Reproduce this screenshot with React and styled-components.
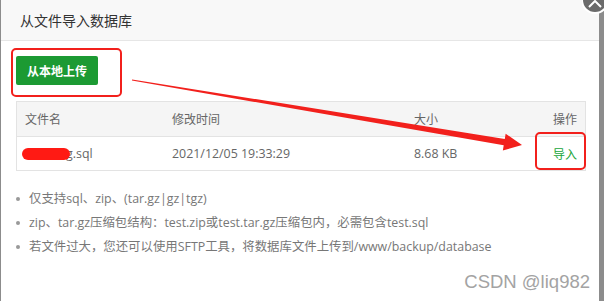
import React from 'react';
import styled, { createGlobalStyle } from 'styled-components';

const GlobalStyle = createGlobalStyle`
  html, body {
    margin: 0;
    padding: 0;
    background: #8c8c8c;
    overflow: hidden;
  }
  body {
    font-family: "Open Sans", "Noto Sans CJK SC", sans-serif;
    text-spacing-trim: space-all;
  }
`;

const Backdrop = styled.div`
  width: 604px;
  height: 301px;
  display: flex;
  background: #8c8c8c;
`;

const Dialog = styled.div`
  position: relative;
  margin-left: 1px;
  width: 598px;
  height: 301px;
  background: #fff;
  display: flex;
  flex-direction: column;
`;

const Header = styled.div`
  height: 40px;
  line-height: 40px;
  padding-left: 19px;
  background: #f8f8f8;
  border-bottom: 1px solid #e6e6e6;
  color: #333;
  font-size: 14px;
  font-family: "Noto Sans CJK SC", sans-serif;
`;

const Body = styled.div`
  padding: 15px 12px 0 15px;
  display: flex;
  flex-direction: column;
  align-items: flex-start;
`;

const UploadButton = styled.button`
  height: 29px;
  padding: 0 11px;
  border: none;
  border-radius: 2px;
  background: #1c9a33;
  color: #fff;
  font-size: 12px;
  font-weight: 600;
  font-family: "Noto Sans CJK SC", sans-serif;
`;

const Table = styled.table`
  margin-top: 16px;
  width: 570px;
  border-collapse: collapse;
  border: 1px solid #e3e3e3;
  font-size: 12.4px;
  color: #666;
  table-layout: fixed;
`;

const Th = styled.th`
  height: 34px;
  background: #f5f5f5;
  font-weight: normal;
  font-size: 12px;
  text-align: ${(p) => p.$align || 'left'};
  padding: 0 ${(p) => (p.$align === 'right' ? '8px' : '0')} 0 ${(p) => p.$pl || '0'};
  border-bottom: 1px solid #e3e3e3;
  width: ${(p) => p.$w || 'auto'};
`;

const Td = styled.td`
  height: 33px;
  text-align: ${(p) => p.$align || 'left'};
  padding: 0 ${(p) => (p.$align === 'right' ? '8px' : '0')} 0 ${(p) => p.$pl || '0'};
  color: ${(p) => p.$color || '#666'};
`;

const Redact = styled.span`
  display: inline-block;
  vertical-align: middle;
  width: 48px;
  height: 12px;
  margin: -2px -4px 0 -3px;
  border-radius: 6px;
  background: #ff1a14;
  position: relative;
`;

const ImportLink = styled.a`
  color: #20a53a;
  font-size: 12px;
  font-family: "Noto Sans CJK SC", sans-serif;
  cursor: pointer;
`;

const Tips = styled.ul`
  list-style: none;
  margin: 16px 0 0;
  padding: 0;
  font-size: 12.4px;
  color: #777;
`;

const Tip = styled.li`
  line-height: 24px;
  display: flex;
  align-items: center;
  &::before {
    content: '';
    width: 4px;
    height: 4px;
    border-radius: 50%;
    background: #999;
    margin: 0 9px 0 0;
  }
`;

const Mark = styled.div`
  position: absolute;
  left: ${(p) => p.$x}px;
  top: ${(p) => p.$y}px;
  width: ${(p) => p.$w}px;
  height: ${(p) => p.$h}px;
  border: 2px solid #f2201c;
  border-radius: 5px;
  box-sizing: border-box;
  pointer-events: none;
`;

const Overlay = styled.svg`
  position: absolute;
  left: 0;
  top: 0;
  pointer-events: none;
`;

const Watermark = styled.div`
  position: absolute;
  right: 9px;
  bottom: 8px;
  font-family: "Liberation Sans", Arial, sans-serif;
  font-size: 18.5px;
  color: #a3a3a3;
  text-shadow: 0 0 1px #fff;
`;

function Arrow() {
  // shaft tapers from a thin start to a wide end, then the head
  const sx = 131, sy = 80, tx = 521, ty = 145;
  const dx = tx - sx, dy = ty - sy;
  const len = Math.hypot(dx, dy);
  const ux = dx / len, uy = dy / len;
  const nx = -uy, ny = ux;
  const headLen = 18, headW = 8.5, shaftW = 3.2;
  const bx = tx - ux * headLen, by = ty - uy * headLen;
  const pts = [
    [sx + nx * 0.6, sy + ny * 0.6],
    [bx + nx * shaftW, by + ny * shaftW],
    [bx + nx * headW, by + ny * headW],
    [tx, ty],
    [bx - nx * headW, by - ny * headW],
    [bx - nx * shaftW, by - ny * shaftW],
    [sx - nx * 0.6, sy - ny * 0.6],
  ];
  return (
    <Overlay width="598" height="301" viewBox="0 0 598 301">
      <polygon points={pts.map((p) => p.join(',')).join(' ')} fill="#f2201c" />
    </Overlay>
  );
}

const CloseButton = styled.svg`
  position: absolute;
  right: 0;
  top: 0;
`;

export default function App() {
  return (
    <>
      <GlobalStyle />
      <Backdrop>
        <Dialog>
          <Header>从文件导入数据库</Header>
          <Body>
            <UploadButton>从本地上传</UploadButton>
            <Table>
              <thead>
                <tr>
                  <Th $pl="8px" $w="147px">文件名</Th>
                  <Th $w="242px">修改时间</Th>
                  <Th>大小</Th>
                  <Th $align="right" $w="60px">操作</Th>
                </tr>
              </thead>
              <tbody>
                <tr>
                  <Td $pl="8px"><Redact />g.sql</Td>
                  <Td>2021/12/05 19:33:29</Td>
                  <Td>8.68 KB</Td>
                  <Td $align="right"><ImportLink>导入</ImportLink></Td>
                </tr>
              </tbody>
            </Table>
            <Tips>
              <Tip>仅支持sql、zip、(tar.gz|gz|tgz)</Tip>
              <Tip>zip、tar.gz压缩包结构：test.zip或test.tar.gz压缩包内，必需包含test.sql</Tip>
              <Tip>若文件过大，您还可以使用SFTP工具，将数据库文件上传到/www/backup/database</Tip>
            </Tips>
          </Body>
          <Mark $x={10} $y={48} $w={111} $h={49} />
          <Mark $x={534} $y={132} $w={51} $h={38} />
          <Arrow />
          <Watermark>CSDN @liq982</Watermark>
        </Dialog>
      </Backdrop>
      <CloseButton width="22" height="16" viewBox="0 0 22 16">
        <circle cx="13" cy="0" r="14" fill="#fff" />
        <circle cx="13" cy="0" r="12" fill="#6b6b6b" />
        <path d="M7 7 L13 1 L19 7" stroke="#fff" strokeWidth="2" fill="none" />
      </CloseButton>
    </>
  );
}
